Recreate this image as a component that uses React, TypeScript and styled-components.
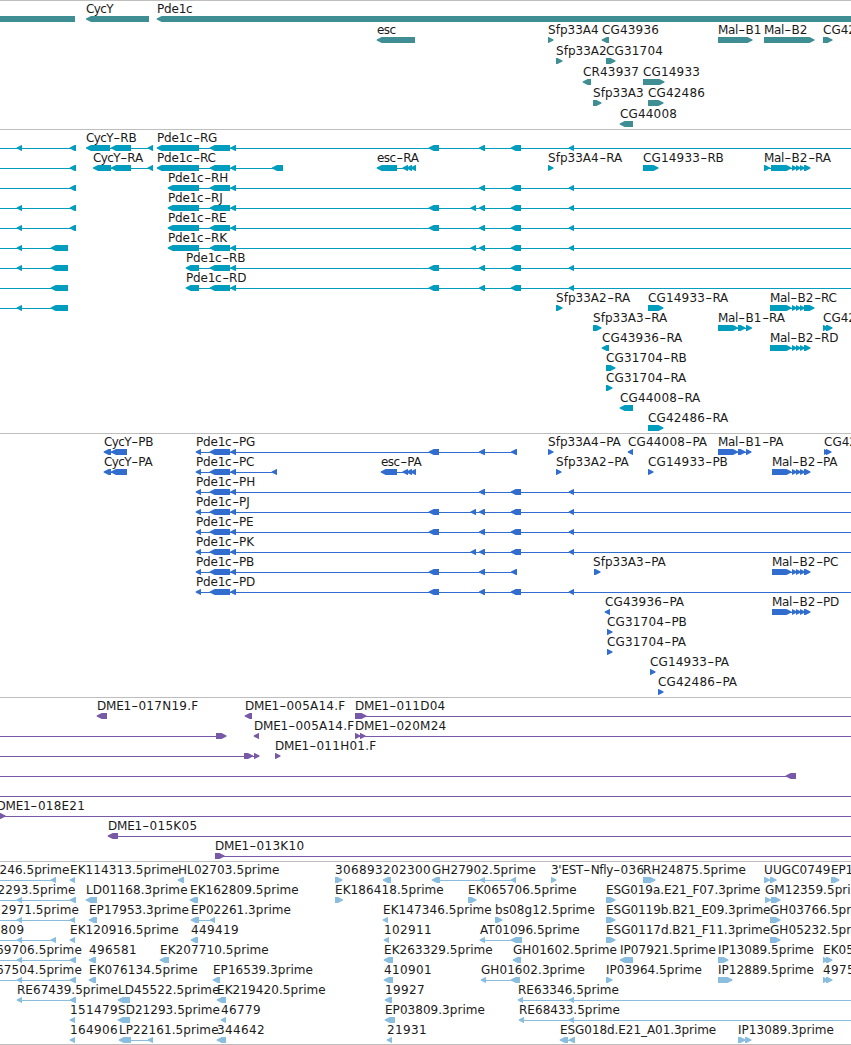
import React from "react";
import styled, { createGlobalStyle } from "styled-components";

type Strand = "-" | "+";
type Span = [number, number];

interface Feature {
  label?: string;
  at?: number;
  strand: Strand;
  blocks: Span[];
  line?: Span;
}

interface TrackData {
  id: string;
  color: string;
  pitch: number;
  height: number;
  rows: Feature[][];
}

const WIDTH = 851;
const START = -10;
const END = 900;

const rev = (label: string, ...blocks: Span[]): Feature => ({ label, strand: "-", blocks });
const fwd = (label: string, ...blocks: Span[]): Feature => ({ label, strand: "+", blocks });
const withLine = (feature: Feature, from: number, to: number): Feature => ({
  ...feature,
  line: [from, to],
});
const at = (feature: Feature, x: number): Feature => ({ ...feature, at: x });

/* Exons shared by several transcripts */
const A: Span = [16.7, 22];
const B: Span = [69.7, 76];
const C: Span = [50.7, 68];
const D: Span = [209.7, 230];
const E: Span = [230.3, 236];
const F: Span = [428.7, 439];
const G: Span = [470.5, 476];
const H: Span = [479, 485];
const I: Span = [510.7, 521];
const J: Span = [568.7, 574];
const CYC: Span = [111, 131];
const CYC_END: Span = [147.6, 153];
const ESC: Span[] = [[402.5, 408], [406.5, 412], [410.5, 416]];
const MAL: Span[] = [[792, 797], [796, 801], [800, 805]];

const tail = (...blocks: Span[]): Feature =>
  withLine(rev("", ...blocks), START, blocks.length ? blocks[blocks.length - 1][1] : END);
const open = (label: string, ...blocks: Span[]): Feature =>
  withLine(rev(label, ...blocks), blocks[0][0] + 3, END);
const est = (label: string, x: number, ...blocks: Span[]): Feature => at({ ...tail(...blocks), label }, x);

const tracks: TrackData[] = [
  {
    id: "gene",
    color: "#3f8e94",
    pitch: 21,
    height: 129,
    rows: [
      [rev("", [START, 75]), rev("CycY", [86, 149]), rev("Pde1c", [156.7, END])],
      [
        rev("esc", [376.7, 415]),
        fwd("Sfp33A4", [548, 553.5]),
        rev("CG43936", [601.7, 609]),
        fwd("Mal-B1", [718, 752.5]),
        fwd("Mal-B2", [764, 814.5]),
        fwd("CG42", [823, 832.5]),
      ],
      [fwd("Sfp33A2", [556, 562.5]), fwd("CG31704", [606, 615.5])],
      [rev("CR43937", [582.7, 591]), fwd("CG14933", [643, 664.5])],
      [fwd("Sfp33A3", [593, 601.5]), fwd("CG42486", [648, 663.5])],
      [rev("CG44008", [619.7, 633])],
    ],
  },
  {
    id: "transcript",
    color: "#009dbf",
    pitch: 20,
    height: 304,
    rows: [
      [tail(A, B), rev("CycY-RB", [86, 110], CYC, CYC_END), open("Pde1c-RG", [156.7, 199], D, E, F, H, I, J)],
      [
        tail(B),
        rev("CycY-RA", [93, 111], CYC, CYC_END),
        rev("Pde1c-RC", [156.7, 199], D, E, [272, 283]),
        rev("esc-RA", [376.7, 397], ...ESC),
        fwd("Sfp33A4-RA", [548, 553.5]),
        fwd("CG14933-RB", [643, 658.5]),
        fwd("Mal-B2-RA", [764, 770], [771, 791.5], ...MAL, [804, 810.5]),
      ],
      [tail(B), open("Pde1c-RH", [167.7, 199], D, E, H, I, J)],
      [tail(A, B), open("Pde1c-RJ", [167.7, 199], D, E, F, G, H, I, J)],
      [tail(A, B), open("Pde1c-RE", [167.7, 199], D, E, F, H, I, J)],
      [tail(A, C), open("Pde1c-RK", [167.7, 199], D, E, G, H, I, J)],
      [tail(A, C), open("Pde1c-RB", [185.7, 199], D, E, F, H, I, J)],
      [tail(C), open("Pde1c-RD", [185.7, 199], D, E, F, H, I, J)],
      [
        tail(A, C),
        fwd("Sfp33A2-RA", [556, 562.5]),
        fwd("CG14933-RA", [648, 663.5]),
        fwd("Mal-B2-RC", [770, 791.5], ...MAL, [804, 814.5]),
      ],
      [
        fwd("Sfp33A3-RA", [593, 601.5]),
        fwd("Mal-B1-RA", [718, 738], [738, 745.5], [746, 752]),
        fwd("CG42", [823, 828.5], [826, 832.5]),
      ],
      [rev("CG43936-RA", [601.7, 609]), fwd("Mal-B2-RD", [770, 791.5], ...MAL, [804, 810.5])],
      [fwd("CG31704-RB", [606, 615.5])],
      [fwd("CG31704-RA", [606, 612.5])],
      [rev("CG44008-RA", [619.7, 633])],
      [fwd("CG42486-RA", [648, 663.5])],
    ],
  },
  {
    id: "cds",
    color: "#306dce",
    pitch: 20,
    height: 264,
    rows: [
      [
        rev("CycY-PB", [103.7, 111], [111, 127]),
        rev("Pde1c-PG", [195.7, 201], D, E, F, H, [511, 517]),
        fwd("Sfp33A4-PA", [548, 553.5]),
        rev("CG44008-PA", [627.7, 633]),
        fwd("Mal-B1-PA", [718, 738], [738, 745.5], [746, 751.5]),
        fwd("CG42", [824, 829], [826, 831.5]),
      ],
      [
        rev("CycY-PA", [103.7, 111], [111, 127]),
        rev("Pde1c-PC", [195.7, 201], D, E, [271.7, 277]),
        rev("esc-PA", [380.7, 397], ...ESC),
        fwd("Sfp33A2-PA", [556, 561.5]),
        fwd("CG14933-PB", [648, 653.5]),
        fwd("Mal-B2-PA", [772, 791.5], ...MAL, [804, 810.5]),
      ],
      [open("Pde1c-PH", [195.7, 201], D, E, H, I, J)],
      [open("Pde1c-PJ", [195.7, 201], D, E, F, G, H, I, J)],
      [open("Pde1c-PE", [195.7, 201], D, E, F, H, I, J)],
      [open("Pde1c-PK", [195.7, 201], D, E, G, H, I, J)],
      [
        rev("Pde1c-PB", [195.7, 201], D, E, F, H, [511, 517]),
        at(fwd("Sfp33A3-PA", [594, 600.5]), 593),
        fwd("Mal-B2-PC", [772, 791.5], ...MAL, [804, 810.5]),
      ],
      [open("Pde1c-PD", [195.7, 201], D, E, F, H, I, J)],
      [rev("CG43936-PA", [604.7, 610]), fwd("Mal-B2-PD", [772, 791.5], ...MAL, [804, 810.5])],
      [fwd("CG31704-PB", [607, 612.5])],
      [fwd("CG31704-PA", [607, 612.5])],
      [fwd("CG14933-PA", [650, 655.5])],
      [fwd("CG42486-PA", [658, 663.5])],
    ],
  },
  {
    id: "bac",
    color: "#7759a8",
    pitch: 20,
    height: 164,
    rows: [
      [
        rev("DME1-017N19.F", [96.7, 107]),
        rev("DME1-005A14.F", [244.7, 252]),
        withLine(fwd("DME1-011D04", [355, 366.5]), 355, END),
      ],
      [
        withLine(fwd("", [216, 226.5]), START, 220),
        rev("DME1-005A14.F", [253.7, 259]),
        withLine(fwd("DME1-020M24", [355, 360.5], [360, 365.5]), 355, END),
      ],
      [
        withLine(fwd("", [244, 253], [254, 259.5]), START, 255),
        fwd("DME1-011H01.F", [275, 280.5]),
      ],
      [tail([785.7, 796])],
      [tail()],
      [at(withLine(fwd("DME1-018E21", [-6, 5.5]), 0, END), -3.5)],
      [open("DME1-015K05", [107.7, 118])],
      [withLine(fwd("DME1-013K10", [215, 224.5]), 216, END)],
    ],
  },
  {
    id: "est",
    color: "#8bbddf",
    pitch: 20,
    height: 184,
    rows: [
      [
        est("246.5prime", -0.5, [50.7, 56]),
        rev("EK114313.5prime", [69.7, 75]),
        rev("HL02703.5prime", [177.7, 184]),
        fwd("306893", [335, 342.5]),
        rev("202300", [382.7, 391]),
        rev("GH27902.5prime", [431.7, 440], [479.7, 485], [510.7, 516]),
        fwd("3'EST-Nfly-036", [551, 556.5]),
        fwd("RH24875.5prime", [643, 655.5]),
        fwd("UUGC0749", [764, 770], [770, 776.5]),
        fwd("EP1", [831, 839.5]),
      ],
      [
        est("2293.5prime", -2.5, A, B),
        rev("LD01168.3prime", [85.7, 97]),
        rev("EK162809.5prime", [189.7, 198]),
        fwd("EK186418.5prime", [335, 343]),
        fwd("EK065706.5prime", [468, 476.5]),
        fwd("ESG019a.E21_F07.3prime", [606, 615.5]),
        fwd("GM12359.5prime", [765, 771], [771, 780.5]),
      ],
      [
        est("2971.5prime", 1, A, [69.7, 75]),
        rev("EP17953.3prime", [88.7, 97]),
        rev("EP02261.3prime", [190.7, 199], [209.7, 215]),
        rev("EK147346.5prime", [382.7, 388]),
        fwd("bs08g12.5prime", [495, 502.5]),
        fwd("ESG0119b.B21_E09.3prime", [606, 615.5]),
        fwd("GH03766.5prime", [770, 780.5]),
      ],
      [
        est("809", 0.5, A, [50.7, 56]),
        rev("EK120916.5prime", [69.7, 75]),
        rev("449419", [190.7, 198]),
        rev("102911", [383.7, 389]),
        rev("AT01096.5prime", [479.7, 485], [510.7, 522]),
        fwd("ESG0117d.B21_F11.3prime", [606, 615.5]),
        fwd("GH05232.5prime", [770, 780.5]),
      ],
      [
        est("69706.5prime", -4, A, B),
        rev("496581", [88.7, 96]),
        rev("EK207710.5prime", [159.7, 169]),
        rev("EK263329.5prime", [383.7, 393]),
        rev("GH01602.5prime", [512.7, 521]),
        rev("IP07921.5prime", [619.7, 633]),
        fwd("IP13089.5prime", [718, 728.5]),
        fwd("EK05", [823, 828.5], [826, 832.5]),
      ],
      [
        est("67504.5prime", -4, A, B),
        rev("EK076134.5prime", [88.7, 96]),
        rev("EP16539.3prime", [212.7, 220]),
        rev("410901", [383.7, 393]),
        rev("GH01602.3prime", [480.7, 486], [510.7, 520]),
        fwd("IP03964.5prime", [606, 612.5]),
        fwd("IP12889.5prime", [718, 732.5]),
        fwd("4975", [823, 828.5], [826, 832.5]),
      ],
      [
        rev("RE67439.5prime", A, B),
        rev("LD45522.5prime", [117.7, 130]),
        rev("EK219420.5prime", [216.7, 226]),
        rev("19927", [384.7, 392]),
        open("RE63346.5prime", [517.7, 523], J),
      ],
      [
        rev("151479", [69.7, 75]),
        rev("SD21293.5prime", [117.7, 130]),
        rev("46779", [220.7, 226]),
        rev("EP03809.3prime", [384.7, 395]),
        open("RE68433.5prime", [518.7, 524], J),
      ],
      [
        rev("164906", [69.7, 75]),
        rev("LP22161.5prime", [118.7, 131], [147.6, 153]),
        rev("344642", [216.7, 226]),
        rev("21931", [386.7, 392]),
        rev("ESG018d.E21_A01.3prime", [559.7, 568], [568.7, 575]),
        fwd("IP13089.3prime", [738, 745.5], [745, 751.5]),
      ],
    ],
  },
];

const GlobalStyle = createGlobalStyle`
  body {
    margin: 0;
    background: #fff;
  }
`;

const Browser = styled.main`
  display: flex;
  flex-direction: column;
  width: ${WIDTH}px;
  height: 1045px;
  overflow: hidden;
  border-bottom: 1px solid #bebebe;
  box-sizing: border-box;
  background: #fff;
`;

const Track = styled.section<{ $height: number }>`
  flex: none;
  box-sizing: border-box;
  height: ${(p) => p.$height}px;
  padding-top: 1px;
  border-top: 1px solid #bebebe;

  &:last-child {
    height: 183px;
  }
`;

const Row = styled.div<{ $pitch: number }>`
  position: relative;
  height: ${(p) => p.$pitch}px;
`;

const Glyphs = styled.svg<{ $color: string }>`
  position: absolute;
  top: 14px;
  left: 0;
  width: ${WIDTH}px;
  height: 6px;
  fill: ${(p) => p.$color};
`;

const Label = styled.span`
  position: absolute;
  top: 0;
  font: 12px/14px "DejaVu Sans", sans-serif;
  color: #1a1a1a;
  white-space: pre;
`;

const Dash = styled.span`
  display: inline-block;
  width: 7.5px;
  text-align: center;
  transform: scaleX(1.6);
`;

/* Difference between a glyph's whole-pixel advance and its natural one, at 12px */
const ADVANCE: Record<string, number> = {
  A: -0.2, B: -0.2, C: -0.4, D: -0.2, E: -0.6, G: -0.3, I: -0.5, K: 0.1, L: 0, M: -0.4,
  P: -0.2, R: -0.3, S: -0.6, T: -0.5, U: 0, Y: -1, a: -0.35, b: 0.4, c: -0.6, d: 0.2,
  e: -0.7, f: -0.3, g: 0.4, i: -0.3, l: -0.3, m: 0, p: 0.2, r: -0.3, s: -0.25, y: -0.6,
  ".": 0.2, _: -1.5,
};

function tracking(text: string): number {
  let extra = 0;
  for (const ch of text) extra += /\d/.test(ch) ? 0.365 : ADVANCE[ch] ?? 0;
  return text.length ? extra / text.length : 0;
}

function LabelText({ text }: { text: string }) {
  return (
    <>
      {text.split("-").map((part, i) => (
        <React.Fragment key={i}>
          {i > 0 && <Dash>-</Dash>}
          <span style={{ letterSpacing: tracking(part) }}>{part}</span>
        </React.Fragment>
      ))}
    </>
  );
}

function blockPoints(strand: Strand, [from, to]: Span): string {
  const head = Math.min(5, to - from);
  return strand === "-"
    ? `${from},3.5 ${from},2.5 ${from + head},0 ${to},0 ${to},6 ${from + head},6`
    : `${from},0 ${to - head},0 ${to},2.5 ${to},3.5 ${to - head},6 ${from},6`;
}

function FeatureGlyph({ feature }: { feature: Feature }) {
  const { blocks, strand } = feature;
  const [from, to] = feature.line ?? [blocks[0][0] + 2, blocks[blocks.length - 1][1] - 2];
  return (
    <g>
      <rect x={from} y={3} width={to - from} height={1} />
      {blocks.map((block, i) => (
        <polygon key={i} points={blockPoints(strand, block)} />
      ))}
    </g>
  );
}

export default function App() {
  return (
    <>
      <GlobalStyle />
      <Browser>
        {tracks.map((track) => (
          <Track key={track.id} $height={track.height}>
            {track.rows.map((features, r) => (
              <Row key={r} $pitch={track.pitch}>
                <Glyphs $color={track.color}>
                  {features.map((feature, i) => (
                    <FeatureGlyph key={i} feature={feature} />
                  ))}
                </Glyphs>
                {features.map((feature, i) =>
                  feature.label ? (
                    <Label key={i} style={{ left: feature.at ?? Math.round(feature.blocks[0][0]) }}>
                      <LabelText text={feature.label} />
                    </Label>
                  ) : null,
                )}
              </Row>
            ))}
          </Track>
        ))}
      </Browser>
    </>
  );
}
